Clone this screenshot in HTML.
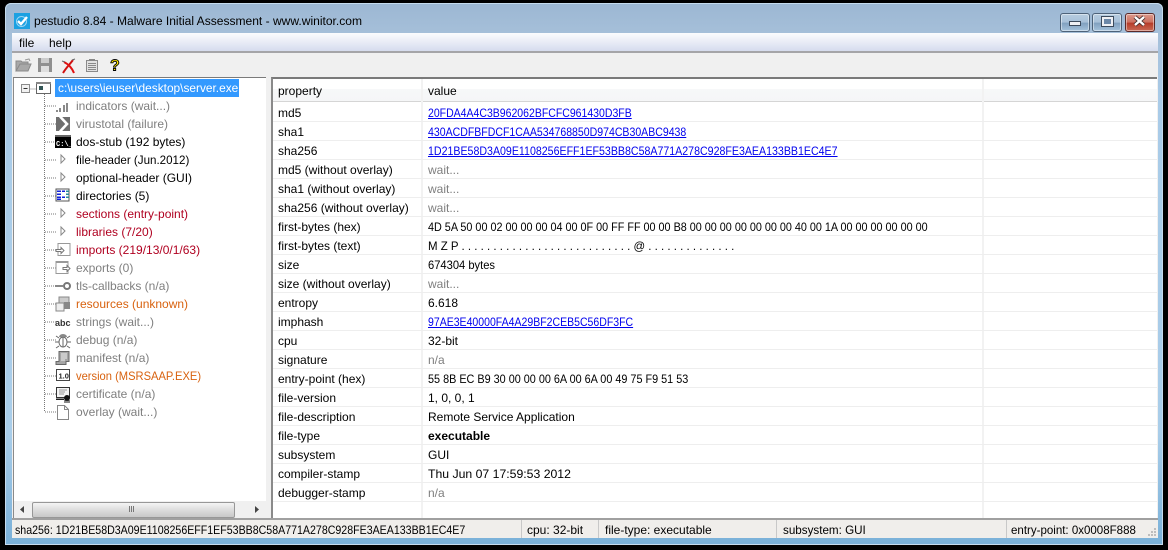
<!DOCTYPE html>
<html><head><meta charset="utf-8"><style>
html,body{margin:0;padding:0;background:#000}
body{width:1168px;height:550px;position:relative;overflow:hidden;font:12px "Liberation Sans",sans-serif;color:#000}
div,span,a{position:absolute;white-space:nowrap}
svg{position:absolute;overflow:visible}
a{color:#00e;text-decoration:underline}
.r{left:278px;height:15px;line-height:15px}
.v{left:428px;height:15px;line-height:15px;transform-origin:left center}
.g{color:#7f7f7f}
.l{position:absolute;left:273px;width:884px;height:1px;background:#eeeeee}
.t{left:76px;height:15px;line-height:15px;transform-origin:left center}
.btn{top:13px;height:17px;border:1px solid #4d6279;border-radius:3px;box-shadow:inset 0 0 0 1px rgba(255,255,255,.45)}
</style></head><body>
<div style="left:5px;top:3px;width:1158px;height:542px;border-radius:6px 6px 0 0;background:linear-gradient(#9cb7d3 0,#a5bfd9 30px,#a9cbe8 100px,#a9cde9 430px,#79b0d8 542px);box-shadow:inset 0 0 0 1px #c5dbee"></div>
<div style="left:14px;top:13px;width:16px;height:16px;background:#1ba1e2"></div>
<svg style="left:14px;top:13px" width="16" height="16"><circle cx="7.5" cy="8.5" r="5" fill="none" stroke="#9ad6f5" stroke-width="1"/><path d="M4 8l3 3 6-7" fill="none" stroke="#fff" stroke-width="2.4"/></svg>
<div id="title" style="left:34px;top:14px;height:15px;line-height:15px;font-size:12.4px;color:#000;transform:scaleX(.972);transform-origin:left center">pestudio 8.84 - Malware Initial Assessment - www.winitor.com</div>
<div class="btn" style="left:1060px;width:28px;background:linear-gradient(#b6cce0 0,#a7c0d8 50%,#7f9fbe 52%,#a5c2dc 100%)"></div>
<div style="left:1069px;top:21px;width:10px;height:3px;background:#eef0f4;border:1px solid #3c4a5c"></div>
<div class="btn" style="left:1092px;width:28px;background:linear-gradient(#b6cce0 0,#a7c0d8 50%,#7f9fbe 52%,#a5c2dc 100%)"></div>
<div style="left:1102px;top:17px;width:7px;height:5px;border:2px solid #eef0f4;outline:1px solid #3c4a5c;background:#6c88a8"></div>
<div class="btn" style="left:1125px;width:28px;border-color:#5a2a2a;background:linear-gradient(#dc9a8c 0,#cc6f5f 50%,#b53a28 52%,#c96a55 100%)"></div>
<svg style="left:1133px;top:15px" width="13" height="12"><path d="M2 2l9 8M11 2l-9 8" stroke="#3d2a2a" stroke-width="4"/><path d="M2 2l9 8M11 2l-9 8" stroke="#fff" stroke-width="2.4"/></svg>

<div style="left:12px;top:33px;width:1146px;height:505px;background:#f0f0f0"></div>
<div style="left:12px;top:33px;width:1146px;height:18px;background:linear-gradient(#fbfcfe,#d6dcee)"></div>
<div style="left:12px;top:51px;width:1146px;height:2px;background:#a5a5a8"></div>
<div style="left:19px;top:36px;line-height:15px">file</div>
<div style="left:49px;top:36px;line-height:15px">help</div>

<svg style="left:15px;top:57px" width="18" height="16"><path d="M1 14V4h5l1 1h6v2H5L1 14h12l3-7H5" fill="#a8a8a8" stroke="#8a8a8a"/><path d="M10 3l4-1 1 2" fill="none" stroke="#999"/></svg>
<svg style="left:38px;top:58px" width="15" height="15"><rect x="0" y="0" width="14" height="14" fill="#8f8f8f"/><rect x="3" y="0" width="8" height="5" fill="#ccc"/><rect x="3" y="8" width="8" height="6" fill="#dedede"/></svg>
<svg style="left:62px;top:59px" width="14" height="14"><path d="M11 1C8 5 4 9 1 14" stroke="#d01010" stroke-width="2" fill="none"/><path d="M2 3C6 5 10 9 12 14" stroke="#e01010" stroke-width="2" fill="none"/><path d="M0 2l3 1M10 1l3-1" stroke="#666"/></svg>
<svg style="left:86px;top:59px" width="12" height="13"><rect x="0.500" y="1.500" width="11" height="11" fill="#e2e2e2" stroke="#8a8a8a"/><path d="M2 4.500h8M2 6.500h8M2 8.500h8M2 10.500h8" stroke="#8a8a8a"/><rect x="3" y="0" width="6" height="2" fill="#888"/></svg>
<svg style="left:110px;top:58px" width="13" height="15"><text x="0" y="12.500" font-family="Liberation Sans" font-weight="bold" font-size="16" fill="#ffe800" stroke="#000" stroke-width=".9">?</text></svg>

<div style="left:13px;top:77px;width:253px;height:441px;background:#fff;border-top:1px solid #7a7a7a;border-left:1px solid #8a8a8a;box-sizing:border-box"></div>
<div style="left:271px;top:77px;width:886px;height:441px;background:#fff;border-top:2px solid #7a7a7a;border-left:2px solid #8a8a8a;box-sizing:border-box"></div>

<!-- tree -->
<svg style="left:13px;top:78px" width="60" height="345"><path d="M9.500 11H23M31.500 16V334" stroke="#777" stroke-dasharray="1 1" fill="none"/><path d="M32 28h12M32 46h12M32 64h12M32 82h12M32 100h12M32 118h12M32 136h12M32 154h12M32 172h12M32 190h12M32 208h12M32 226h12M32 244h12M32 262h12M32 280h12M32 298h12M32 316h12M32 334h12" stroke="#777" stroke-dasharray="1 1"/><rect x="8.500" y="6.500" width="8" height="8" fill="#f2f2f2" stroke="#8a8a8a"/><path d="M10.500 10.500h4" stroke="#333"/><rect x="23.500" y="4.500" width="14" height="11" fill="#fff" stroke="#666"/><rect x="23" y="4" width="15" height="2" fill="#888"/><rect x="26" y="8" width="4" height="4" fill="#355"/></svg>
<div style="left:55px;top:79px;width:184px;height:18px;background:#3399ff"></div>
<div class="t" style="left:58px;top:81px;color:#fff;transform:scaleX(.99)">c:\users\ieuser\desktop\server.exe</div>

<svg style="left:56px;top:99px" width="16" height="320" shape-rendering="crispEdges">
<!-- indicators -->
<path d="M1 11v2M4 9v4M8 6v7M11 4v9" stroke="#8a8a8a" stroke-width="2" fill="none"/>
<!-- virustotal: grey square, white chevron -->
<rect x="0" y="18" width="14" height="14" fill="#6e6e6e"/>
<path d="M4 17.500l7 7.500-7 7.500" fill="none" stroke="#fff" stroke-width="2.6" shape-rendering="auto"/>
<!-- dos -->
<rect x="-1" y="36" width="16" height="13" fill="#000"/><rect x="-1" y="36" width="16" height="2" fill="#666"/><text x="0" y="47" font-size="7" font-family="Liberation Mono" fill="#fff" font-weight="bold">C:\_</text>
<!-- arrows -->
<path d="M5 56v8l4-4z" fill="#fff" stroke="#888" shape-rendering="auto"/>
<path d="M5 74v8l4-4z" fill="#fff" stroke="#888" shape-rendering="auto"/>
<!-- directories -->
<rect x="0" y="90" width="13" height="12" fill="#fff" stroke="#555"/><path d="M1 92h4M1 95h4M1 98h4M1 100h4M6 92h3M6 98h3" stroke="#1020d8" stroke-width="1.500"/><path d="M10 92h3M10 95h3M10 98h3" stroke="#2a8a9a" stroke-width="1.500"/>
<path d="M5 110v8l4-4z" fill="#fff" stroke="#888" shape-rendering="auto"/>
<path d="M5 128v8l4-4z" fill="#fff" stroke="#888" shape-rendering="auto"/>
<!-- imports -->
<path d="M2 144.500h12v12H2z" fill="#fff" stroke="#999"/><path d="M0 150.500h5v-2l3 3-3 3v-2H0z" fill="#fff" stroke="#777" shape-rendering="auto"/>
<!-- exports -->
<path d="M0 162.500h12v12H0z" fill="#fff" stroke="#999"/><rect x="0" y="162" width="12" height="2" fill="#999"/><path d="M7 168.500h4v-2l3 3-3 3v-2H7z" fill="#fff" stroke="#777" shape-rendering="auto"/>
<!-- tls -->
<path d="M-1 187h8" stroke="#888" stroke-width="2"/><circle cx="11" cy="187" r="3" fill="#fff" stroke="#777" stroke-width="2" shape-rendering="auto"/>
<!-- resources -->
<rect x="3" y="198" width="10" height="6" fill="#ccc" stroke="#888"/><rect x="0" y="204" width="8" height="8" fill="#eee" stroke="#888"/><rect x="8" y="203" width="6" height="7" fill="#888"/>
<!-- abc -->
<text x="-1" y="227" font-size="9" font-family="Liberation Sans" font-weight="bold" fill="#333" shape-rendering="auto">abc</text>
<!-- debug -->
<ellipse cx="7" cy="243" rx="4" ry="5" fill="#fff" stroke="#666" shape-rendering="auto"/><path d="M3 238a4 3 0 0 1 8 0z" fill="#888" shape-rendering="auto"/><path d="M0 237l3 2M14 237l-3 2M-1 243h4M15 243h-4M0 249l3-2M14 249l-3-2M7 238v10" stroke="#666" fill="none" shape-rendering="auto"/>
<!-- manifest -->
<path d="M3 252.500h10v10H10v3H0v-3h3z" fill="#a5a5a5" stroke="#666" shape-rendering="auto"/><path d="M5 255h6M5 257h6M5 259h6M5 261h4" stroke="#eee"/>
<!-- version -->
<rect x="0.500" y="270.500" width="13" height="11" fill="#fff" stroke="#444"/><text x="2.500" y="279.500" font-size="7.500" font-family="Liberation Sans" font-weight="bold" fill="#222" shape-rendering="auto">1.0</text>
<!-- certificate -->
<rect x="0.500" y="288.500" width="13" height="10" fill="#f4f4f4" stroke="#333"/><path d="M3 291h8M3 293h6M3 295h5" stroke="#999"/><path d="M0 300h8" stroke="#222" stroke-width="1.500"/><circle cx="11" cy="299" r="3" fill="#111" shape-rendering="auto"/><path d="M9 301v3M13 301v3M11 301v3" stroke="#111"/>
<!-- overlay -->
<path d="M1.500 306.500h7l4 4v10h-11z" fill="#fff" stroke="#888"/><path d="M8.500 306.500v4h4" fill="none" stroke="#888"/>
</svg>

<div class="t g" style="top:99px">indicators (wait...)</div>
<div class="t g" style="top:117px">virustotal (failure)</div>
<div class="t" style="top:135px">dos-stub (192 bytes)</div>
<div class="t" style="top:153px;transform:scaleX(.965)">file-header (Jun.2012)</div>
<div class="t" style="top:171px">optional-header (GUI)</div>
<div class="t" style="top:189px">directories (5)</div>
<div class="t" style="top:207px;color:#b00020">sections (entry-point)</div>
<div class="t" style="top:225px;color:#b00020">libraries (7/20)</div>
<div class="t" style="top:243px;color:#b00020">imports (219/13/0/1/63)</div>
<div class="t g" style="top:261px">exports (0)</div>
<div class="t g" style="top:279px">tls-callbacks (n/a)</div>
<div class="t" style="top:297px;color:#d8620f">resources (unknown)</div>
<div class="t g" style="top:315px">strings (wait...)</div>
<div class="t g" style="top:333px">debug (n/a)</div>
<div class="t g" style="top:351px">manifest (n/a)</div>
<div class="t" style="top:369px;color:#d8620f;transform:scaleX(.93)">version (MSRSAAP.EXE)</div>
<div class="t g" style="top:387px">certificate (n/a)</div>
<div class="t g" style="top:405px">overlay (wait...)</div>

<!-- tree scrollbar -->
<div style="left:14px;top:501px;width:252px;height:17px;background:#f0f0f0"></div>
<div style="left:32px;top:502px;width:201px;height:14px;border:1px solid #979797;border-radius:2px;background:linear-gradient(#f4f4f4,#dcdcdc 50%,#c8c8c8)"></div>
<svg style="left:19px;top:505px" width="240" height="9"><path d="M5 1v7L1 4.500z" fill="#444"/><path d="M236 1v7l4-3.500z" fill="#444"/><path d="M110.500 1v6M112.500 1v6M114.500 1v6" stroke="#777"/></svg>

<!-- table -->
<div style="left:273px;top:79px;width:884px;height:22px;background:linear-gradient(#fff 0,#fff 45%,#f7f8f9 45%,#f5f6f7)"></div>
<div style="left:273px;top:101px;width:884px;height:1px;background:#d5d5d5"></div>
<div style="left:421px;top:79px;width:2px;height:439px;background:#f2f2f2"></div>
<div style="left:982px;top:79px;width:2px;height:439px;background:#f2f2f2"></div>
<div class="l" style="top:121px"></div><div class="l" style="top:140px"></div><div class="l" style="top:159px"></div><div class="l" style="top:178px"></div><div class="l" style="top:197px"></div><div class="l" style="top:216px"></div><div class="l" style="top:235px"></div><div class="l" style="top:254px"></div><div class="l" style="top:273px"></div><div class="l" style="top:292px"></div><div class="l" style="top:311px"></div><div class="l" style="top:330px"></div><div class="l" style="top:349px"></div><div class="l" style="top:368px"></div><div class="l" style="top:387px"></div><div class="l" style="top:406px"></div><div class="l" style="top:425px"></div><div class="l" style="top:444px"></div><div class="l" style="top:463px"></div><div class="l" style="top:482px"></div><div class="l" style="top:501px"></div>

<div class="r" style="top:84px">property</div><div class="v" style="top:84px">value</div>
<div class="r" style="top:106px">md5</div><a class="v" style="top:106px;transform:scaleX(.875)">20FDA4A4C3B962062BFCFC961430D3FB</a>
<div class="r" style="top:125px">sha1</div><a class="v" style="top:125px;transform:scaleX(.878)">430ACDFBFDCF1CAA534768850D974CB30ABC9438</a>
<div class="r" style="top:144px">sha256</div><a class="v" style="top:144px;transform:scaleX(.885)">1D21BE58D3A09E1108256EFF1EF53BB8C58A771A278C928FE3AEA133BB1EC4E7</a>
<div class="r" style="top:163px">md5 (without overlay)</div><div class="v g" style="top:163px">wait...</div>
<div class="r" style="top:182px">sha1 (without overlay)</div><div class="v g" style="top:182px">wait...</div>
<div class="r" style="top:201px">sha256 (without overlay)</div><div class="v g" style="top:201px">wait...</div>
<div class="r" style="top:220px">first-bytes (hex)</div><div class="v" style="top:220px;transform:scaleX(.9)">4D 5A 50 00 02 00 00 00 04 00 0F 00 FF FF 00 00 B8 00 00 00 00 00 00 00 40 00 1A 00 00 00 00 00 00</div>
<div class="r" style="top:239px">first-bytes (text)</div><div class="v" style="top:239px;transform:scaleX(.955)">M Z P . . . . . . . . . . . . . . . . . . . . . . . . . . . @ . . . . . . . . . . . . . .</div>
<div class="r" style="top:258px">size</div><div class="v" style="top:258px;transform:scaleX(.93)">674304 bytes</div>
<div class="r" style="top:277px">size (without overlay)</div><div class="v g" style="top:277px">wait...</div>
<div class="r" style="top:296px">entropy</div><div class="v" style="top:296px">6.618</div>
<div class="r" style="top:315px">imphash</div><a class="v" style="top:315px;transform:scaleX(.876)">97AE3E40000FA4A29BF2CEB5C56DF3FC</a>
<div class="r" style="top:334px">cpu</div><div class="v" style="top:334px">32-bit</div>
<div class="r" style="top:353px">signature</div><div class="v g" style="top:353px">n/a</div>
<div class="r" style="top:372px">entry-point (hex)</div><div class="v" style="top:372px;transform:scaleX(.903)">55 8B EC B9 30 00 00 00 6A 00 6A 00 49 75 F9 51 53</div>
<div class="r" style="top:391px">file-version</div><div class="v" style="top:391px">1, 0, 0, 1</div>
<div class="r" style="top:410px">file-description</div><div class="v" style="top:410px">Remote Service Application</div>
<div class="r" style="top:429px">file-type</div><div class="v" style="top:429px;font-weight:bold">executable</div>
<div class="r" style="top:448px">subsystem</div><div class="v" style="top:448px">GUI</div>
<div class="r" style="top:467px">compiler-stamp</div><div class="v" style="top:467px;transform:scaleX(1.02)">Thu Jun 07 17:59:53 2012</div>
<div class="r" style="top:486px">debugger-stamp</div><div class="v g" style="top:486px">n/a</div>

<!-- status -->
<div style="left:12px;top:518px;width:1146px;height:2px;background:#a0a0a0"></div>
<div style="left:12px;top:520px;width:1146px;height:18px;background:#f0eeeb"></div>
<div style="left:521px;top:520px;width:1px;height:18px;background:#c8c8c8"></div>
<div style="left:598px;top:520px;width:1px;height:18px;background:#c8c8c8"></div>
<div style="left:776px;top:520px;width:1px;height:18px;background:#c8c8c8"></div>
<div style="left:1006px;top:520px;width:1px;height:18px;background:#c8c8c8"></div>
<div style="left:15px;top:523px;line-height:15px;transform:scaleX(.885);transform-origin:left center">sha256: 1D21BE58D3A09E1108256EFF1EF53BB8C58A771A278C928FE3AEA133BB1EC4E7</div>
<div style="left:527px;top:523px;line-height:15px">cpu: 32-bit</div>
<div style="left:605px;top:523px;line-height:15px">file-type: executable</div>
<div style="left:783px;top:523px;line-height:15px;transform:scaleX(.97);transform-origin:left center">subsystem: GUI</div>
<div style="left:1011px;top:523px;line-height:15px;transform:scaleX(.96);transform-origin:left center">entry-point: 0x0008F888</div>
<svg style="left:1147px;top:527px" width="10" height="10"><path d="M7 1h2v2H7zM4 4h2v2H4zM7 4h2v2H7zM1 7h2v2H1zM4 7h2v2H4zM7 7h2v2H7z" fill="#bdbdbd"/></svg>
</body></html>
